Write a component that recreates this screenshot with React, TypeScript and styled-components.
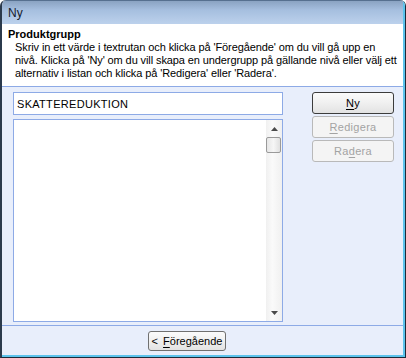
import React from "react";
import styled, { createGlobalStyle } from "styled-components";

const GlobalStyle = createGlobalStyle`
  html, body {
    margin: 0;
    padding: 0;
    background: #ffffff;
  }
  body {
    font-family: "Liberation Sans", Arial, sans-serif;
    font-size: 11px;
    color: #000;
  }
`;

const Frame = styled.div`
  width: 406px;
  height: 358px;
  box-sizing: border-box;
  display: flex;
  flex-direction: column;
  background: #e8eefb;
  border-left: 2px solid #2b3a4c;
  border-right: 1px solid #1d2a38;
  border-bottom: 1px solid #1d2a38;
  border-radius: 6px 6px 0 0;
  overflow: hidden;
`;

const Inner = styled.div`
  flex: 1;
  display: flex;
  flex-direction: column;
  border-right: 2px solid #5cc3ec;
  border-bottom: 2px solid #5cc3ec;
`;

const TitleBar = styled.div`
  height: 24px;
  box-sizing: border-box;
  padding: 0 0 0 6px;
  display: flex;
  align-items: center;
  border-top: 1px solid #56708f;
  background: linear-gradient(#8aa3c2 0%, #a6bfdf 40%, #bcd1ec 100%);
  color: #15202c;
  font-size: 12px;
`;

const Header = styled.div`
  height: 63px;
  box-sizing: border-box;
  background: #ffffff;
  border-bottom: 1px solid #8daae6;
  padding: 4px 0 0 6px;
  line-height: 13px;
  white-space: nowrap;
`;

const HeaderTitle = styled.div`
  font-weight: bold;
`;

const HeaderText = styled.div`
  padding-left: 7px;
  letter-spacing: -0.1px;
`;

const Body = styled.div`
  flex: 1;
  display: flex;
  padding: 5px 0 3px 11px;
  gap: 29px;
`;

const LeftColumn = styled.div`
  width: 270px;
  display: flex;
  flex-direction: column;
  gap: 4px;
`;

const TextBox = styled.div`
  height: 23px;
  box-sizing: border-box;
  border: 1px solid #8daae6;
  background: #ffffff;
  display: flex;
  align-items: center;
  padding-left: 3px;
  letter-spacing: 0.3px;
`;

const ListBox = styled.div`
  flex: 1;
  box-sizing: border-box;
  border: 1px solid #8daae6;
  background: #ffffff;
  display: flex;
  justify-content: flex-end;
`;

const ScrollBar = styled.div`
  width: 16px;
  display: flex;
  flex-direction: column;
  background: linear-gradient(90deg, #f0f0f0, #fafafa 40%, #f0f0f0);
`;

const ScrollArrow = styled.div`
  height: 17px;
  display: flex;
  align-items: center;
  justify-content: center;
`;

const Thumb = styled.div`
  height: 16px;
  box-sizing: border-box;
  margin: 0 1px 0 0;
  border: 1px solid #9a9a9a;
  border-radius: 2px;
  background: linear-gradient(90deg, #e6e6e6, #f6f6f6 50%, #e0e0e0);
`;

const Track = styled.div`
  flex: 1;
`;

const ButtonColumn = styled.div`
  width: 82px;
  display: flex;
  flex-direction: column;
  gap: 2px;
`;

const Button = styled.div<{ $disabled?: boolean; $default?: boolean }>`
  height: 22px;
  box-sizing: border-box;
  border: 1px solid ${(p) => (p.$default ? "#3c3c3c" : "#b9b9b9")};
  border-radius: 3px;
  background: ${(p) =>
    p.$disabled
      ? "#f4f4f4"
      : "linear-gradient(#fbfbfb 0%, #f0f0f0 50%, #e2e2e2 100%)"};
  color: ${(p) => (p.$disabled ? "#a3a3a3" : "#000")};
  display: flex;
  align-items: center;
  justify-content: center;
  letter-spacing: 0.3px;
`;

const Footer = styled.div`
  height: 30px;
  box-sizing: border-box;
  border-top: 1px solid #8daae6;
  display: flex;
  justify-content: center;
  padding-top: 5px;
  padding-right: 31px;
`;

const BackButton = styled(Button)`
  width: 78px;
  height: 20px;
  border-color: #707070;
  gap: 5px;
  letter-spacing: 0;
`;

const Key = styled.span`
  text-decoration: underline;
  text-underline-offset: 2px;
`;

function Arrow({ down }: { down?: boolean }): JSX.Element {
  return (
    <svg width="7" height="4" viewBox="0 0 7 4">
      <path
        d={down ? "M0 0 H7 L3.5 4 Z" : "M0 4 H7 L3.5 0 Z"}
        fill="#4a4a4a"
      />
    </svg>
  );
}

export default function App(): JSX.Element {
  return (
    <>
      <GlobalStyle />
      <Frame>
        <Inner>
          <TitleBar>Ny</TitleBar>
          <Header>
            <HeaderTitle>Produktgrupp</HeaderTitle>
            <HeaderText>
              Skriv in ett värde i textrutan och klicka på 'Föregående' om du vill gå upp en
              <br />
              nivå. Klicka på 'Ny' om du vill skapa en undergrupp på gällande nivå eller välj ett
              <br />
              alternativ i listan och klicka på 'Redigera' eller 'Radera'.
            </HeaderText>
          </Header>
          <Body>
            <LeftColumn>
              <TextBox>SKATTEREDUKTION</TextBox>
              <ListBox>
                <ScrollBar>
                  <ScrollArrow>
                    <Arrow />
                  </ScrollArrow>
                  <Thumb />
                  <Track />
                  <ScrollArrow>
                    <Arrow down />
                  </ScrollArrow>
                </ScrollBar>
              </ListBox>
            </LeftColumn>
            <ButtonColumn>
              <Button $default>
                <Key>N</Key>y
              </Button>
              <Button $disabled>
                <Key>R</Key>edigera
              </Button>
              <Button $disabled>
                Ra<Key>d</Key>era
              </Button>
            </ButtonColumn>
          </Body>
          <Footer>
            <BackButton>
              <span>&lt;</span>
              <span>
                <Key>F</Key>öregående
              </span>
            </BackButton>
          </Footer>
        </Inner>
      </Frame>
    </>
  );
}
